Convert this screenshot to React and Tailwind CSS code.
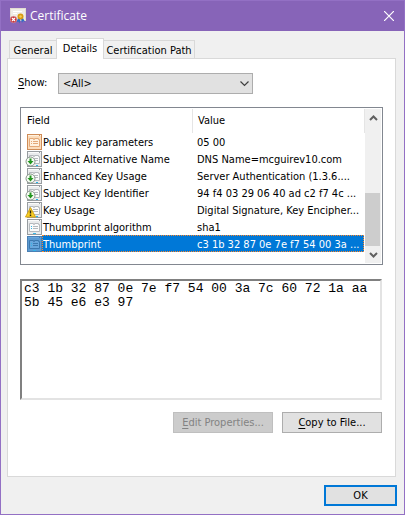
import React, { useState } from "react";

const fields = [
  { name: "Public key parameters", value: "05 00", kind: "orange" },
  { name: "Subject Alternative Name", value: "DNS Name=mcguirev10.com", kind: "arrow" },
  { name: "Enhanced Key Usage", value: "Server Authentication (1.3.6....", kind: "arrow" },
  { name: "Subject Key Identifier", value: "94 f4 03 29 06 40 ad c2 f7 4c ...", kind: "arrow" },
  { name: "Key Usage", value: "Digital Signature, Key Encipher...", kind: "warning" },
  { name: "Thumbprint algorithm", value: "sha1", kind: "plain" },
  { name: "Thumbprint", value: "c3 1b 32 87 0e 7e f7 54 00 3a ...", kind: "selected" },
];

function CertificateIcon() {
  return (
    <svg className="-mt-px ml-px" width="16" height="16" viewBox="0 0 16 16" aria-hidden="true">
      <rect x="0.5" y="0.5" width="15" height="12" fill="#eeece6" stroke="#e2dcd2" />
      <path d="M3 3.5h9M3 5.5h4" stroke="#fff" />
      <path d="M8 10l-1.5 4 2-0.5 1 2 1-4zM11 11l1 4 1-2 2 1-2-4z" fill="#2f6fc4" />
      <circle cx="10.5" cy="8.5" r="3" fill="#d99a12" />
      <circle cx="10.5" cy="8.5" r="1.2" fill="#f7cf58" />
      <circle cx="3.5" cy="11.5" r="3.3" fill="#c8343b" stroke="#d9a0a0" strokeWidth="0.5" />
      <path d="M2 10l3 3M5 10l-3 3" stroke="#fff" strokeWidth="1.2" />
    </svg>
  );
}

function FieldIcon({ kind }) {
  const palettes = {
    orange: ["#fbdcbb", "#cf8c57", "#e3a878", "#fff1df"],
    selected: ["#5c9bd3", "#4a80b4", "#3c78ae", "#69a7dc"],
  };
  const [fill, edge, line, inner] = palettes[kind] || ["#e9ebec", "#979ca0", "#b4b9bd", "#fafbfb"];
  const badge = kind === "arrow" || kind === "warning";
  return (
    <svg className="block" width="17" height="17" viewBox="0 0 17 17" aria-hidden="true">
      <rect x="2.5" y="1.5" width="14" height="15" fill={fill} stroke={edge} />
      <path d="M3 2.5h13" stroke={inner} />
      <path d="M14 2.5h1" stroke={edge} />
      <path d="M4.5 13.5v-8h4v1h1v-1h4v1h1v7z" fill={inner} stroke={line} />
      <path d="M6 8.5h1M8 8.5h5M6 10.5h1M8 10.5h5" stroke={line} />
      {(kind === "plain" || kind === "selected") && <path d="M6 8.5h1M6 10.5h1M8 15.5h3" stroke="#35b5e6" />}
      {badge && <path d="M11 15.5h2" stroke="#24b5e8" />}
      {kind === "arrow" && (
        <>
          <circle cx="5.5" cy="11.5" r="4.5" fill="#f5faf3" stroke="#88948a" />
          <path d="M4.5 8.5h2v2.5h2l-3 3.5-3-3.5h2z" fill="#22951f" />
        </>
      )}
      {kind === "warning" && (
        <>
          <path d="M5.5 6.5L10.5 16H0.5z" fill="#f9cf23" stroke="#d0a21a" strokeLinejoin="round" />
          <path d="M5.5 9.5v3M5.5 13.5v1.5" stroke="#2c2412" strokeWidth="1.4" />
        </>
      )}
    </svg>
  );
}

function Chevron({ up = false }) {
  return (
    <svg width="9" height="6" viewBox="0 0 9 6" fill="none" stroke="#606060" strokeWidth="2" aria-hidden="true">
      <path d={up ? "M1 5l3.5-3.5L8 5" : "M1 1l3.5 3.5L8 1"} />
    </svg>
  );
}

const tabStyle = "h-[18px] whitespace-nowrap border border-b-0 border-[#d9d9d9] bg-[#f0f0f0] text-center leading-[20px]";
const buttonStyle = "h-[21px] border text-center leading-[20px]";

export default function App() {
  const [filter, setFilter] = useState("all");
  return (
    <main className="w-full border border-[#9370c4] bg-[#f0f0f0] font-['DejaVu_Sans_Condensed','Noto_Sans',sans-serif] text-[11px] text-black">
      <header className="flex h-[30px] items-center bg-[#8764b8] pr-[10px] pl-2 text-white">
        <CertificateIcon />
        <h1 className="ml-1 flex-1 font-['Open_Sans','Noto_Sans',sans-serif] text-xs">Certificate</h1>
        <button type="button" aria-label="Close" className="flex size-[10px] items-center justify-center">
          <svg width="10" height="10" viewBox="0 0 10 10" stroke="#fff" strokeWidth="1.2">
            <path d="M0 0l10 10M10 0L0 10" />
          </svg>
        </button>
      </header>

      <div className="pt-[7px] pr-[7px] pb-[8px] pl-[6px]">
        <div role="tablist" className="flex items-end pl-[2px]">
          <button type="button" role="tab" aria-selected="false" className={`${tabStyle} w-[47px] border-r-0`}>General</button>
          <button type="button" role="tab" aria-selected="true" className="z-10 -mb-px h-[21px] w-[48px] border border-b-0 border-[#d9d9d9] bg-white pb-px text-center leading-[20px]">Details</button>
          <button type="button" role="tab" aria-selected="false" className={`${tabStyle} w-[91px] border-l-0`}>Certification Path</button>
        </div>

        <section role="tabpanel" aria-label="Details" className="mr-px border border-[#d9d9d9] bg-white px-3 pt-[14px] pb-[43px]">
          <div className="flex items-center">
            <label htmlFor="show" className="-ml-0.5 w-[40px]"><span className="underline underline-offset-2">S</span>how:</label>
            <div className="relative">
              <select
                id="show"
                value={filter}
                onChange={(event) => setFilter(event.target.value)}
                className="block h-[21px] w-[195px] appearance-none rounded-none border border-[#adadad] bg-[#e1e1e1] pt-px pl-1 leading-[18px]"
              >
                <option value="all">&lt;All&gt;</option>
              </select>
              <span className="pointer-events-none absolute top-[8px] right-[4px]">
                <svg width="9" height="6" viewBox="0 0 9 6" fill="none" stroke="#404040" strokeWidth="1.2" aria-hidden="true">
                  <path d="M0.5 0.5l4 4 4-4" />
                </svg>
              </span>
            </div>
          </div>

          <div className="mt-[13px] flex h-[158px] border border-[#828790] p-px">
            <table className="h-fit min-w-0 flex-1 table-fixed border-separate border-spacing-0 text-left">
              <colgroup>
                <col className="w-[20px]" />
                <col className="w-[151px]" />
                <col />
              </colgroup>
              <thead>
                <tr className="h-[24px]">
                  <th scope="col" colSpan="2" className="border-r border-[#e5e5e5] p-0 pt-px pl-[5px] font-normal">Field</th>
                  <th scope="col" className="border-r border-[#e5e5e5] p-0 pt-px pl-[5px] font-normal">Value</th>
                </tr>
              </thead>
              <tbody>
                {fields.map((field) => {
                  const selected = field.kind === "selected";
                  const highlight = selected ? "bg-[#0078d7] text-white outline-dotted outline-1 -outline-offset-1 outline-[#ff8728]" : "";
                  return (
                    <tr key={field.name} className="h-[17px] leading-[19px]">
                      <td className="p-0 pl-[3px]"><FieldIcon kind={field.kind} /></td>
                      <td colSpan="2" className="p-0">
                        <div className={`mr-px flex h-[17px] whitespace-nowrap ${highlight}`}>
                          <span className="w-[155px] pl-px">{field.name}</span>
                          <span>{field.value}</span>
                        </div>
                      </td>
                    </tr>
                  );
                })}
              </tbody>
            </table>
            <div className="flex w-4 flex-col items-center bg-[#f0f0f0]">
              <button type="button" aria-label="Scroll up" className="flex h-[17px] items-center justify-center"><Chevron up /></button>
              <div className="flex w-full flex-1 flex-col justify-end">
                <div className="h-[53px] w-[15px] bg-[#cdcdcd]" />
              </div>
              <button type="button" aria-label="Scroll down" className="flex h-[17px] items-center justify-center"><Chevron /></button>
            </div>
          </div>

          <div className="mt-[14px] pr-px">
            <textarea
              readOnly
              aria-label="Field value"
              className="block h-[121px] w-full resize-none border-2 border-t-[#808080] border-r-[#e3e3e3] border-b-[#e3e3e3] border-l-[#808080] bg-white px-0.5 pt-px font-['Liberation_Mono',monospace] text-[13px] leading-[14px] outline-none"
              value="c3 1b 32 87 0e 7e f7 54 00 3a 7c 60 72 1a aa 5b 45 e6 e3 97"
            />

            <div className="mt-3 flex justify-end gap-[9px]">
              <button type="button" disabled className={`${buttonStyle} w-[100px] border-[#bfbfbf] bg-[#cccccc] text-[#838383]`}>
                <span className="underline underline-offset-2">E</span>dit Properties...
              </button>
              <button type="button" className={`${buttonStyle} w-[100px] border-[#adadad] bg-[#e1e1e1]`}>
                <span className="underline underline-offset-2">C</span>opy to File...
              </button>
            </div>
          </div>
        </section>

        <div className="mt-2 flex justify-end">
          <button type="button" className="h-[21px] w-[73px] border-2 border-[#0078d7] bg-[#e1e1e1] text-center leading-[18px]">OK</button>
        </div>
      </div>
    </main>
  );
}
